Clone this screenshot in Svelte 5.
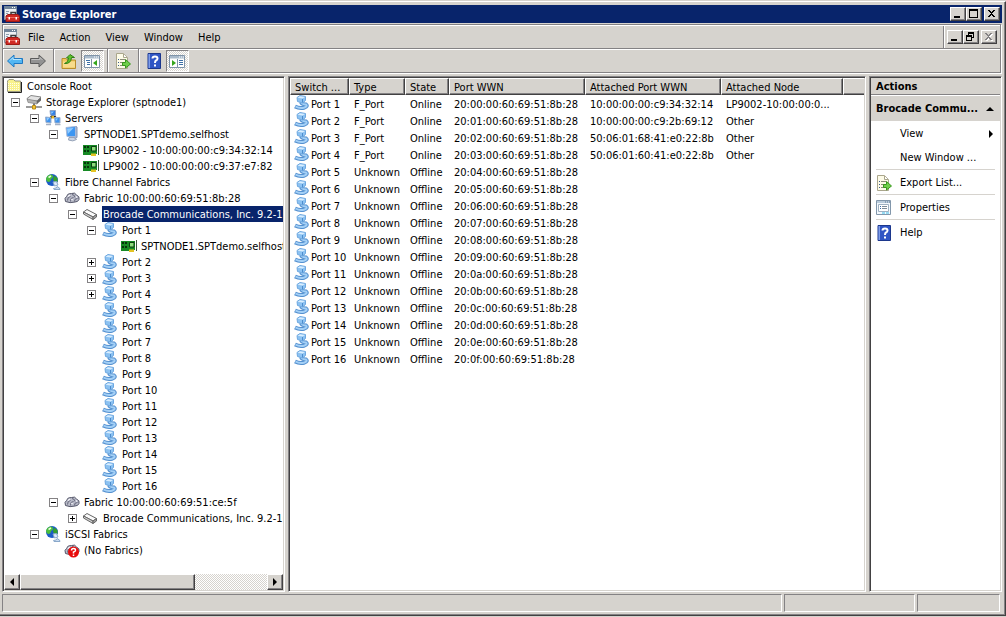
<script>
/**
 * Storage Explorer console window: scope tree, port list and actions pane.
 */

/**
 * @typedef {Object} TreeNode
 * @property {string} label
 * @property {string} icon
 * @property {boolean} [open] - Expanded state, only for nodes with an expander
 * @property {boolean} [selected]
 * @property {TreeNode[]} [children]
 */

const menus = ['File', 'Action', 'View', 'Window', 'Help'];

const toolGroups = [
	[{ icon: 'back', label: 'Back' }, { icon: 'forward', label: 'Forward' }],
	[{ icon: 'up', label: 'Up one level' }, { icon: 'showTree', label: 'Show/Hide Console Tree', pressed: true }],
	[{ icon: 'export', label: 'Export List' }],
	[{ icon: 'help', label: 'Help' }, { icon: 'showActions', label: 'Show/Hide Action Pane', pressed: true }]
];

/** @type {TreeNode[]} */
const portNodes = Array.from({ length: 16 }, (_, i) => ({
	label: `Port ${i + 1}`,
	icon: 'port',
	open: i === 0 ? true : i < 4 ? false : undefined,
	children: i === 0 ? [{ label: 'SPTNODE1.SPTdemo.selfhost', icon: 'card' }] : []
}));

/** @type {TreeNode[]} */
let tree = $state([
	{
		label: 'Storage Explorer (sptnode1)',
		icon: 'drive',
		open: true,
		children: [
			{
				label: 'Servers',
				icon: 'servers',
				open: true,
				children: [
					{
						label: 'SPTNODE1.SPTdemo.selfhost',
						icon: 'computer',
						open: true,
						children: [
							{ label: 'LP9002 - 10:00:00:00:c9:34:32:14', icon: 'card' },
							{ label: 'LP9002 - 10:00:00:00:c9:37:e7:82', icon: 'card' }
						]
					}
				]
			},
			{
				label: 'Fibre Channel Fabrics',
				icon: 'globe',
				open: true,
				children: [
					{
						label: 'Fabric 10:00:00:60:69:51:8b:28',
						icon: 'cloud',
						open: true,
						children: [
							{
								label: 'Brocade Communications, Inc. 9.2-10',
								icon: 'switch',
								open: true,
								selected: true,
								children: portNodes
							}
						]
					},
					{
						label: 'Fabric 10:00:00:60:69:51:ce:5f',
						icon: 'cloud',
						open: true,
						children: [{ label: 'Brocade Communications, Inc. 9.2-10', icon: 'switch', open: false }]
					}
				]
			},
			{
				label: 'iSCSI Fabrics',
				icon: 'globe',
				open: true,
				children: [{ label: '(No Fabrics)', icon: 'cloudUnknown' }]
			}
		]
	}
]);

const attached = [
	['10:00:00:00:c9:34:32:14', 'LP9002-10:00:00:0...'],
	['10:00:00:00:c9:2b:69:12', 'Other'],
	['50:06:01:68:41:e0:22:8b', 'Other'],
	['50:06:01:60:41:e0:22:8b', 'Other']
];

const columns = ['Switch ...', 'Type', 'State', 'Port WWN', 'Attached Port WWN', 'Attached Node', ''];

const ports = Array.from({ length: 16 }, (_, i) => ({
	name: `Port ${i + 1}`,
	type: i < 4 ? 'F_Port' : 'Unknown',
	state: i < 4 ? 'Online' : 'Offline',
	wwn: `20:${i.toString(16).padStart(2, '0')}:00:60:69:51:8b:28`,
	attachedWwn: attached[i]?.[0] ?? '',
	attachedNode: attached[i]?.[1] ?? ''
}));

const actions = [
	{ label: 'View', submenu: true },
	{ label: 'New Window ...' },
	{ label: 'Export List...', icon: 'export', ruled: true },
	{ label: 'Properties', icon: 'properties', ruled: true },
	{ label: 'Help', icon: 'help', ruled: true }
];
</script>

{#snippet cloudShape()}
  <path d="M1.500 11.500Q0 8 2.500 6.500Q3.500 3 7.500 3.500Q11 2 12.500 5Q16 6.500 15 9.500Q14 12 11 12Q6 13.500 1.500 11.500Z" fill="#b9bbc8" stroke="#55576a" />
  <path d="M3.500 10.500Q3.500 6.500 6.500 6.500M6.500 11.500Q6 7.500 9.500 7.500M8 4.500Q11 5 11 7.500M10.500 11.500Q10 8.500 13.500 8.500" fill="none" stroke="#66687c" />
  <path d="M4 6.500L6 5M7.500 10L8.500 9M12 6.500L13 7.500" stroke="#f4f4fa" stroke-width="1.500" />
{/snippet}

{#snippet icon(name)}
  <svg class="icon" viewBox="0 0 16 16" width="16" height="16" aria-hidden="true">
    {#if name === 'toolbox'}
      <path d="M.5 .5H12.500V13.500H.5Z" fill="#eef1f4" stroke="#8795a4" />
      <path d="M0 0H13V3H0Z" fill="#71859a" />
      <path d="M8 1.500H9M10 1.500H11" stroke="#fff" />
      <path d="M2 5.500H5M2 7.500H4M2 9.500H3" stroke="#8c9cac" />
      <path d="M7 8.500V6.500H11.500V8.500" fill="none" stroke="#3b3b3b" stroke-width="1.500" />
      <path d="M2 10L4 8.500H14L15.500 10V15.500H2Z" fill="#cf2a24" stroke="#9c1a15" />
      <path d="M2.500 11.500H15" stroke="#ec6a60" />
      <path d="M4.500 11H6V13.500H4.500ZM11.500 11H13V13.500H11.500Z" fill="#fff" />
    {:else if name === 'back'}
      <path d="M.5 8L7 2V5.500H15.500V10.500H7V14Z" fill="#52b6f2" stroke="#1f78c2" />
      <path d="M3 7.500L6 4.500V6.500H14" fill="none" stroke="#b8e6ff" />
    {:else if name === 'forward'}
      <path d="M15.500 8L9 2V5.500H.5V10.500H9V14Z" fill="#929292" stroke="#5c5c5c" />
      <path d="M1.500 6.500H10V4.500L12.500 7" fill="none" stroke="#c2c2c2" />
    {:else if name === 'up'}
      <path d="M1 5.500H5L6.500 7H14.500V15.500H1Z" fill="#f0c75c" stroke="#b98d2c" />
      <path d="M2 8.500H14V14.500H2Z" fill="#f8dc8c" />
      <path d="M3.500 10.500Q7.500 9.500 7.500 5H5.500L9 1.500L13.500 4.500H10.500Q10 11 3.500 10.500Z" fill="#5fc32c" stroke="#2f7f12" />
    {:else if name === 'showTree' || name === 'showActions'}
      <path d="M.5 2.500H15.500V14.500H.5Z" fill="#fff" stroke="#7f93a8" />
      <path d="M1 3H15V5.500H1Z" fill="#a9bacb" />
      <path d="M10 4H11M12 4H13M14 4H15" stroke="#fff" />
      {#if name === 'showTree'}
        <path d="M7.500 6V14" stroke="#7f93a8" />
        <path d="M2 7.500H6M3 9.500H6M3 11.500H6" stroke="#3c6ea5" />
        <path d="M13 7V13L9 10Z" fill="#35a51b" />
      {:else}
        <path d="M8.500 6V14" stroke="#7f93a8" />
        <path d="M10 7.500H14M10 9.500H14M10 11.500H14" stroke="#3c6ea5" />
        <path d="M3 7V13L7 10Z" fill="#35a51b" />
      {/if}
    {:else if name === 'export'}
      <path d="M1.500 .5H8.500L12.500 4.500V15.500H1.500Z" fill="#fdfbe8" stroke="#aaa68c" />
      <path d="M8.500 1V4.500H12" fill="#fff" stroke="#aaa68c" />
      <path d="M3 6.500H4M3 9.500H4M3 12.500H4" stroke="#3b5c8c" />
      <path d="M5 6.500H10M5 9.500H8M5 12.500H8" stroke="#8c8c78" />
      <path d="M7.500 9.500H10.500V6.500L15.500 11L10.500 15V12.500H7.500Z" fill="#6fcf4a" stroke="#38961c" />
    {:else if name === 'help'}
      <path d="M2 .5H14.500V15.500H2Z" fill="#2f55c4" stroke="#1c378c" />
      <path d="M2.500 1V15H4V1Z" fill="#7f9de8" />
      <path d="M6.500 5.500Q6.500 3.500 9 3.500Q11.500 3.500 11.500 5.500Q11.500 7 10 7.500Q9 8 9 10M9 11.500V13.500" fill="none" stroke="#fff" stroke-width="2" />
    {:else if name === 'properties'}
      <path d="M.5 .5H14.500V14.500H.5Z" fill="#f3f8fc" stroke="#8297ab" />
      <path d="M1 1H14V3H1Z" fill="#b9cbdb" />
      <path d="M9 2H10M11 2H12M13 2H14" stroke="#5a7590" />
      <path d="M2.500 4.500H12.500V11.500H2.500Z" fill="#fff" stroke="#9fb1c2" />
      <path d="M4 6.500H5M4 8.500H5" stroke="#356ba8" />
      <path d="M6 6.500H11M6 8.500H11" stroke="#7d8b98" />
      <path d="M6 13H9M10 13H13" stroke="#38bce8" />
    {:else if name === 'folder'}
      <path d="M.5 4.500V3L2 1.500H6.500L8 3H13.500V13.500H.5Z" fill="#f9f28c" stroke="#9c9a84" />
      <path d="M1 5.500H13M1 7.500H13M1 9.500H13M1 11.500H13" stroke="#fffde8" stroke-dasharray="1 1" />
      <path d="M14.500 4V14.500H1" fill="none" stroke="#222" />
    {:else if name === 'drive'}
      <path d="M1 4.500L5 1.500L15 3L11 7L2 6.500Z" fill="#e3e3e3" stroke="#888" />
      <path d="M1 5L11 7V10L2 8.500Z" fill="#b4b4b4" stroke="#666" stroke-width=".5" />
      <path d="M11 7L15 3.500V6.500L11 10Z" fill="#666" />
      <path d="M8 9.500V12" stroke="#777" stroke-width="2" />
      <path d="M0 13H16" stroke="#9a9a9a" stroke-width="2" />
      <path d="M6.500 11.500H9.500V15H6.500Z" fill="#f3c432" stroke="#b88c1a" />
    {:else if name === 'servers'}
      <path d="M5 8.500L8 5L12 9" fill="none" stroke="#222" stroke-width="2" />
      <path d="M5 .5L10.500 .5V5.500L5.500 5Z" fill="#2f7fe4" stroke="#8fa3c4" />
      <path d="M.5 7L6 7.500V13L1 12.500Z" fill="#3d92ee" stroke="#9db0cd" />
      <path d="M9.500 7.500L15 7.500V13L10 13Z" fill="#3d92ee" stroke="#9db0cd" />
      <path d="M1.500 8L4.500 8L2 11ZM10.500 8.500H13L11 11ZM6 1.500H9L6.500 4Z" fill="#8ecbff" />
      <path d="M1 14.500H6M10 14.500H15.500" stroke="#a4b0c4" stroke-width="1.500" />
      <path d="M6.500 6H9V8.500H6.500Z" fill="#e7b722" />
    {:else if name === 'computer'}
      <path d="M11 0L13 1V11.500L10 13Z" fill="#a9b9d6" stroke="#8595b4" />
      <path d="M2 1.500L11.500 .5V10.500L3 10.500Z" fill="#3c96f2" stroke="#a5b8d8" />
      <path d="M3 2.500L9.500 2L3.800 8Z" fill="#8fcaff" />
      <path d="M5 11.500L10 11.500L12.500 13.500Q9 16 4.500 14Z" fill="#cbd5e4" stroke="#97a3b8" />
    {:else if name === 'card'}
      <path d="M0 3H14V12H8V13H0Z" fill="#178a24" />
      <path d="M15.500 2V13" stroke="#3f5a3f" />
      <path d="M1 4H3V6H1ZM4 4H6V6H4ZM1 8H3V10H1ZM4 8H6V10H4Z" fill="#07340c" />
      <path d="M8.500 4.500H13V9H8.500Z" fill="#8ddc7b" stroke="#0a3d10" />
      <path d="M8 11.500H13V14H8Z" fill="#e4c424" />
    {:else if name === 'globe'}
      <circle cx="7" cy="6" r="6" fill="#1c5cc8" />
      <path d="M2 2.500Q5 -.5 7.500 1Q9 4 6 5Q6 7.500 4 8Q1.500 8 1 5Z" fill="#4cbf3a" />
      <path d="M9 1.500L12.500 4L12.500 8L9.500 8L8 5.500Z" fill="#35a02c" />
      <path d="M3.500 3.500L6 2" stroke="#e8ffe0" stroke-width="1.500" />
      <path d="M8 8L11.500 7.500L13 11L9.500 12Z" fill="#dceafa" stroke="#8aa8ca" />
      <path d="M8.500 14.500Q12 14.500 12 12.500L14.500 14L15 15.500H9Z" fill="#c9dcf2" stroke="#8aa8ca" />
    {:else if name === 'cloud'}
      {@render cloudShape()}
    {:else if name === 'cloudUnknown'}
      {@render cloudShape()}
      <circle cx="9.500" cy="10" r="5.500" fill="#e80c0c" />
      <path d="M7.500 8.500Q7.500 6.500 9.500 6.500Q11.500 6.500 11.500 8.200Q11.500 9.500 9.500 10V11.500M9.500 12.500V14" fill="none" stroke="#fff" stroke-width="1.500" />
    {:else if name === 'switch'}
      <path d="M.5 6L4 3.500L13.500 8.500L10 11Z" fill="#fafafa" stroke="#666" />
      <path d="M.5 6V8L10 13.500V11Z" fill="#d2d2d2" stroke="#666" />
      <path d="M10 11L13.500 8.500V11L10 13.500Z" fill="#a4a4a4" stroke="#666" />
    {:else if name === 'port'}
      <path d="M7 7Q8 9.500 12 9.500Q14 11 10.500 12.500Q6 14 1 11.500" fill="none" stroke="#5591d0" stroke-width="4" />
      <path d="M7 7Q8 9.500 12 9.500Q14 11 10.500 12.500Q6 14 1.500 11.500" fill="none" stroke="#a4d0f6" stroke-width="2" />
      <path d="M3 2.500L6 .5L11.500 1.500L11.500 5.500L8.500 8L3.500 6.500Z" fill="#8cc2f2" stroke="#6ea8e0" />
      <path d="M3.500 2.800L6 1.200L11 2L8.500 3.500Z" fill="#d9eeff" />
      <path d="M8.500 4V7.500" stroke="#4d8ccc" />
    {/if}
  </svg>
{/snippet}

{#snippet frameGlyph(name)}
  <svg viewBox="0 0 12 10" width="12" height="10" shape-rendering="crispEdges" aria-hidden="true">
    {#if name === 'minimize'}
      <path d="M2 7H8V9H2Z" />
    {:else if name === 'maximize'}
      <path d="M1 0H10V9H1ZM2 2V8H9V2Z" fill-rule="evenodd" />
    {:else if name === 'restore'}
      <path d="M3 0H9V6H7V5H8V2H4V3H3ZM1 3H7V9H1ZM2 5V8H6V5Z" fill-rule="evenodd" />
    {:else}
      <path d="M2 1H4V2H5V3H6V2H7V1H9V2H8V3H7V4H6V5H7V6H8V7H9V8H7V7H6V6H5V7H4V8H2V7H3V6H4V5H5V4H4V3H3V2H2Z" />
    {/if}
  </svg>
{/snippet}

{#snippet branch(nodes)}
  <ul>
    {#each nodes as node}
      <li>
        <div class="node">
          <span class="slot">
            {#if node.open !== undefined}
              <button
                class="expander"
                class:closed={!node.open}
                type="button"
                aria-label={node.open ? 'Collapse' : 'Expand'}
                onclick={() => (node.open = !node.open)}
              ></button>
            {/if}
          </span>
          {@render icon(node.icon)}
          <span class="label" class:selected={node.selected}>{node.label}</span>
        </div>
        {#if node.open && node.children}
          {@render branch(node.children)}
        {/if}
      </li>
    {/each}
  </ul>
{/snippet}

<div class="window">
  <header class="titlebar">
    {@render icon('toolbox')}
    <h1>Storage Explorer</h1>
    <div class="frame-buttons">
      <button type="button" aria-label="Minimize">{@render frameGlyph('minimize')}</button>
      <button type="button" aria-label="Maximize">{@render frameGlyph('maximize')}</button>
      <button class="close" type="button" aria-label="Close">{@render frameGlyph('close')}</button>
    </div>
  </header>

  <div class="rebar">
    <div class="menubar">
      {@render icon('toolbox')}
      <nav>
        {#each menus as menu}
          <button type="button">{menu}</button>
        {/each}
      </nav>
      <div class="frame-buttons child">
        <button type="button" aria-label="Minimize child">{@render frameGlyph('minimize')}</button>
        <button type="button" aria-label="Restore child">{@render frameGlyph('restore')}</button>
        <button class="close" type="button" aria-label="Close child" disabled>{@render frameGlyph('close')}</button>
      </div>
    </div>
    <div class="toolbar">
      {#each toolGroups as group}
        <div class="tool-group">
          {#each group as tool}
            <button class:pressed={tool.pressed} type="button" aria-label={tool.label}>
              {@render icon(tool.icon)}
            </button>
          {/each}
        </div>
      {/each}
    </div>
  </div>

  <main>
    <section class="pane scope">
      <div class="tree">
        <div class="node">
          {@render icon('folder')}
          <span class="label">Console Root</span>
        </div>
        {@render branch(tree)}
      </div>
      <div class="scrollbar">
        <button type="button" aria-label="Scroll left"><span class="arrow left"></span></button>
        <div class="track"><div class="thumb"></div></div>
        <button type="button" aria-label="Scroll right"><span class="arrow right"></span></button>
      </div>
    </section>

    <section class="pane">
      <table>
        <colgroup>
          <col class="c-name" />
          <col class="c-type" />
          <col class="c-state" />
          <col class="c-wwn" />
          <col class="c-wwn" />
          <col class="c-node" />
          <col />
        </colgroup>
        <thead>
          <tr>
            {#each columns as column}
              <th>{column}</th>
            {/each}
          </tr>
        </thead>
        <tbody>
          {#each ports as port}
            <tr>
              <td><span class="port-name">{@render icon('port')}{port.name}</span></td>
              <td>{port.type}</td>
              <td>{port.state}</td>
              <td>{port.wwn}</td>
              <td>{port.attachedWwn}</td>
              <td>{port.attachedNode}</td>
              <td></td>
            </tr>
          {/each}
        </tbody>
      </table>
    </section>

    <aside class="pane">
      <h2>Actions</h2>
      <button class="group-title" type="button">Brocade Commu...<span class="arrow up"></span></button>
      <ul class="actions">
        {#each actions as action}
          <li class:ruled={action.ruled}>
            <button type="button">
              <span class="action-icon">
                {#if action.icon}{@render icon(action.icon)}{/if}
              </span>
              {action.label}
              {#if action.submenu}<span class="arrow right"></span>{/if}
            </button>
          </li>
        {/each}
      </ul>
    </aside>
  </main>

  <footer class="statusbar">
    <div></div>
    <div></div>
    <div></div>
  </footer>
</div>

<style>
  :global(body) {
    background: #d6d3ce;
  }

  .window {
    display: flex;
    flex-direction: column;
    box-sizing: border-box;
    height: calc(100vh - 2px);
    min-height: 400px;
    margin: 1px 0;
    padding: 3px 2px 2px;
    border-top: 1px solid #fff;
    border-right: 1px solid #424142;
    border-bottom: 1px solid #424142;
    background: #d6d3ce;
    box-shadow: inset -1px -1px #848284;
    color: #000;
    font: 11px/16px "DejaVu Sans Condensed", "Noto Sans", sans-serif;
    white-space: nowrap;
    cursor: default;
  }

  button {
    margin: 0;
    padding: 0;
    border: none;
    border-radius: 0;
    background: none;
    color: inherit;
    font: inherit;
  }

  ul {
    margin: 0;
    padding: 0;
    list-style: none;
  }

  .icon {
    flex: none;
    display: block;
  }

  .titlebar {
    display: flex;
    align-items: center;
    gap: 2px;
    height: 18px;
    margin-right: 1px;
    padding: 0 2px;
    background: #08246b;
    color: #fff;
  }

  h1 {
    flex: 1;
    margin: 0;
    padding-top: 2px;
    font-size: 11px;
    font-weight: bold;
  }

  .frame-buttons {
    display: flex;
    align-items: center;
  }

  .frame-buttons button,
  .scrollbar button,
  .thumb {
    border: 1px solid;
    border-color: #fff #424142 #424142 #fff;
    box-shadow: inset -1px -1px #848284;
    background: #d6d3ce;
  }

  .frame-buttons button {
    box-sizing: border-box;
    width: 16px;
    height: 14px;
    padding: 1px;
    color: #000;
  }

  .frame-buttons svg {
    display: block;
    fill: currentColor;
  }

  .frame-buttons .close {
    margin-left: 2px;
  }

  .frame-buttons button:disabled {
    color: #848284;
  }

  .frame-buttons button:disabled svg {
    filter: drop-shadow(1px 1px 0 #fff);
  }

  .rebar {
    margin: 1px 2px 0 0;
    border: 1px solid #848284;
    box-shadow: inset 1px 1px #fff, 1px 1px #fff;
  }

  .menubar {
    display: flex;
    align-items: center;
    height: 23px;
    padding-left: 1px;
    border-bottom: 1px solid #848284;
  }

  nav {
    display: flex;
    flex: 1;
  }

  nav button {
    padding: 2px 7px 0 8px;
  }

  .child {
    height: 22px;
    padding: 0 3px;
    border-left: 1px solid #848284;
    box-shadow: inset 1px 0 #fff;
  }

  .toolbar {
    display: flex;
    height: 23px;
    padding-left: 1px;
    box-shadow: inset 0 1px #fff;
  }

  .tool-group {
    display: flex;
    align-items: center;
  }

  .tool-group + .tool-group {
    margin-left: 3px;
    padding-left: 4px;
    border-left: 1px solid #848284;
    box-shadow: inset 1px 0 #fff;
  }

  .tool-group button {
    box-sizing: border-box;
    width: 23px;
    height: 22px;
    padding: 0 2px;
    border: 1px solid transparent;
  }

  .tool-group .pressed {
    border-color: #848284 #fff #fff #848284;
    background: repeating-conic-gradient(#fff 0% 25%, #d6d3ce 0% 50%) 0 0 / 2px 2px;
  }

  main {
    display: grid;
    grid-template-columns: 283px minmax(0, 1fr) 133px;
    gap: 3px;
    flex: 1;
    min-height: 0;
    margin: 3px 1px 2px 0;
  }

  .pane {
    min-width: 0;
    overflow: hidden;
    padding: 1px;
    border: 1px solid;
    border-color: #848284 #fff #fff #848284;
    background: #fff;
    box-shadow: inset 1px 1px #424142, inset -1px -1px #d6d3ce;
  }

  .scope {
    display: flex;
    flex-direction: column;
  }

  .tree {
    flex: 1;
    min-height: 0;
    overflow: hidden;
    padding-left: 3px;
  }

  .tree ul ul {
    margin-left: 19px;
  }

  .node {
    display: flex;
    align-items: center;
    height: 16px;
  }

  .slot {
    flex: none;
    width: 15px;
    padding-left: 4px;
  }

  .expander {
    display: block;
    box-sizing: border-box;
    width: 9px;
    height: 9px;
    border: 1px solid #848284;
    background: linear-gradient(#000, #000) center / 5px 1px no-repeat;
  }

  .expander.closed {
    background:
      linear-gradient(#000, #000) center / 5px 1px no-repeat,
      linear-gradient(#000, #000) center / 1px 5px no-repeat;
  }

  .label {
    margin-left: 3px;
    padding: 2px 1px 0;
    line-height: 14px;
  }

  .label.selected {
    flex: 1;
    background: #08246b;
    color: #fff;
  }

  .scrollbar {
    display: flex;
    height: 16px;
  }

  .scrollbar button {
    display: flex;
    align-items: center;
    justify-content: center;
    box-sizing: border-box;
    width: 16px;
  }

  .track {
    flex: 1;
    background: repeating-conic-gradient(#fff 0% 25%, #d6d3ce 0% 50%) 0 0 / 2px 2px;
  }

  .thumb {
    box-sizing: border-box;
    width: 71%;
    height: 100%;
  }

  .arrow {
    width: 0;
    height: 0;
    border: 4px solid transparent;
  }

  .arrow.left {
    border-left-width: 0;
    border-right-color: #000;
  }

  .arrow.right {
    border-right-width: 0;
    border-left-color: #000;
  }

  .arrow.up {
    border-top-width: 0;
    border-bottom-color: #000;
  }

  table {
    width: 100%;
    border-collapse: separate;
    border-spacing: 0;
    table-layout: fixed;
  }

  .c-name {
    width: 59px;
  }

  .c-type {
    width: 56px;
  }

  .c-state {
    width: 44px;
  }

  .c-wwn {
    width: 136px;
  }

  .c-node {
    width: 122px;
  }

  th {
    box-sizing: border-box;
    height: 17px;
    padding: 2px 0 0 4px;
    border: 1px solid;
    border-color: #fff #424142 #424142 #fff;
    box-shadow: inset -1px -1px #848284;
    background: #d6d3ce;
    font-weight: normal;
    line-height: 13px;
    text-align: left;
  }

  th:last-child {
    border-right: none;
    box-shadow: inset 0 -1px #848284;
  }

  td {
    box-sizing: border-box;
    height: 17px;
    padding: 2px 0 0 5px;
    line-height: 15px;
  }

  td:first-child {
    padding: 0 0 0 4px;
  }

  .port-name {
    display: flex;
    gap: 1px;
    height: 17px;
    line-height: 19px;
  }

  h2 {
    margin: 0;
    padding: 2px 0 0 5px;
    border-bottom: 1px solid #848284;
    background: #d6d3ce;
    font-size: 11px;
    font-weight: bold;
    line-height: 14px;
  }

  .group-title {
    display: flex;
    align-items: center;
    justify-content: space-between;
    width: 100%;
    height: 25px;
    margin-top: 1px;
    padding: 1px 6px 0 5px;
    background: #d6d3ce;
    font-weight: bold;
  }

  .actions {
    padding: 0 5px;
  }

  .actions .ruled {
    border-top: 1px solid #d6d3ce;
  }

  .actions button {
    display: flex;
    align-items: center;
    width: 100%;
    height: 24px;
    padding-top: 1px;
  }

  .action-icon {
    width: 24px;
  }

  .actions .arrow {
    margin: 0 2px 0 auto;
  }

  .statusbar {
    display: grid;
    grid-template-columns: minmax(0, 1fr) 131px 83px;
    gap: 2px;
    height: 18px;
    margin: 0 3px 1px 0;
  }

  .statusbar div {
    border: 1px solid;
    border-color: #848284 #fff #fff #848284;
  }
</style>
